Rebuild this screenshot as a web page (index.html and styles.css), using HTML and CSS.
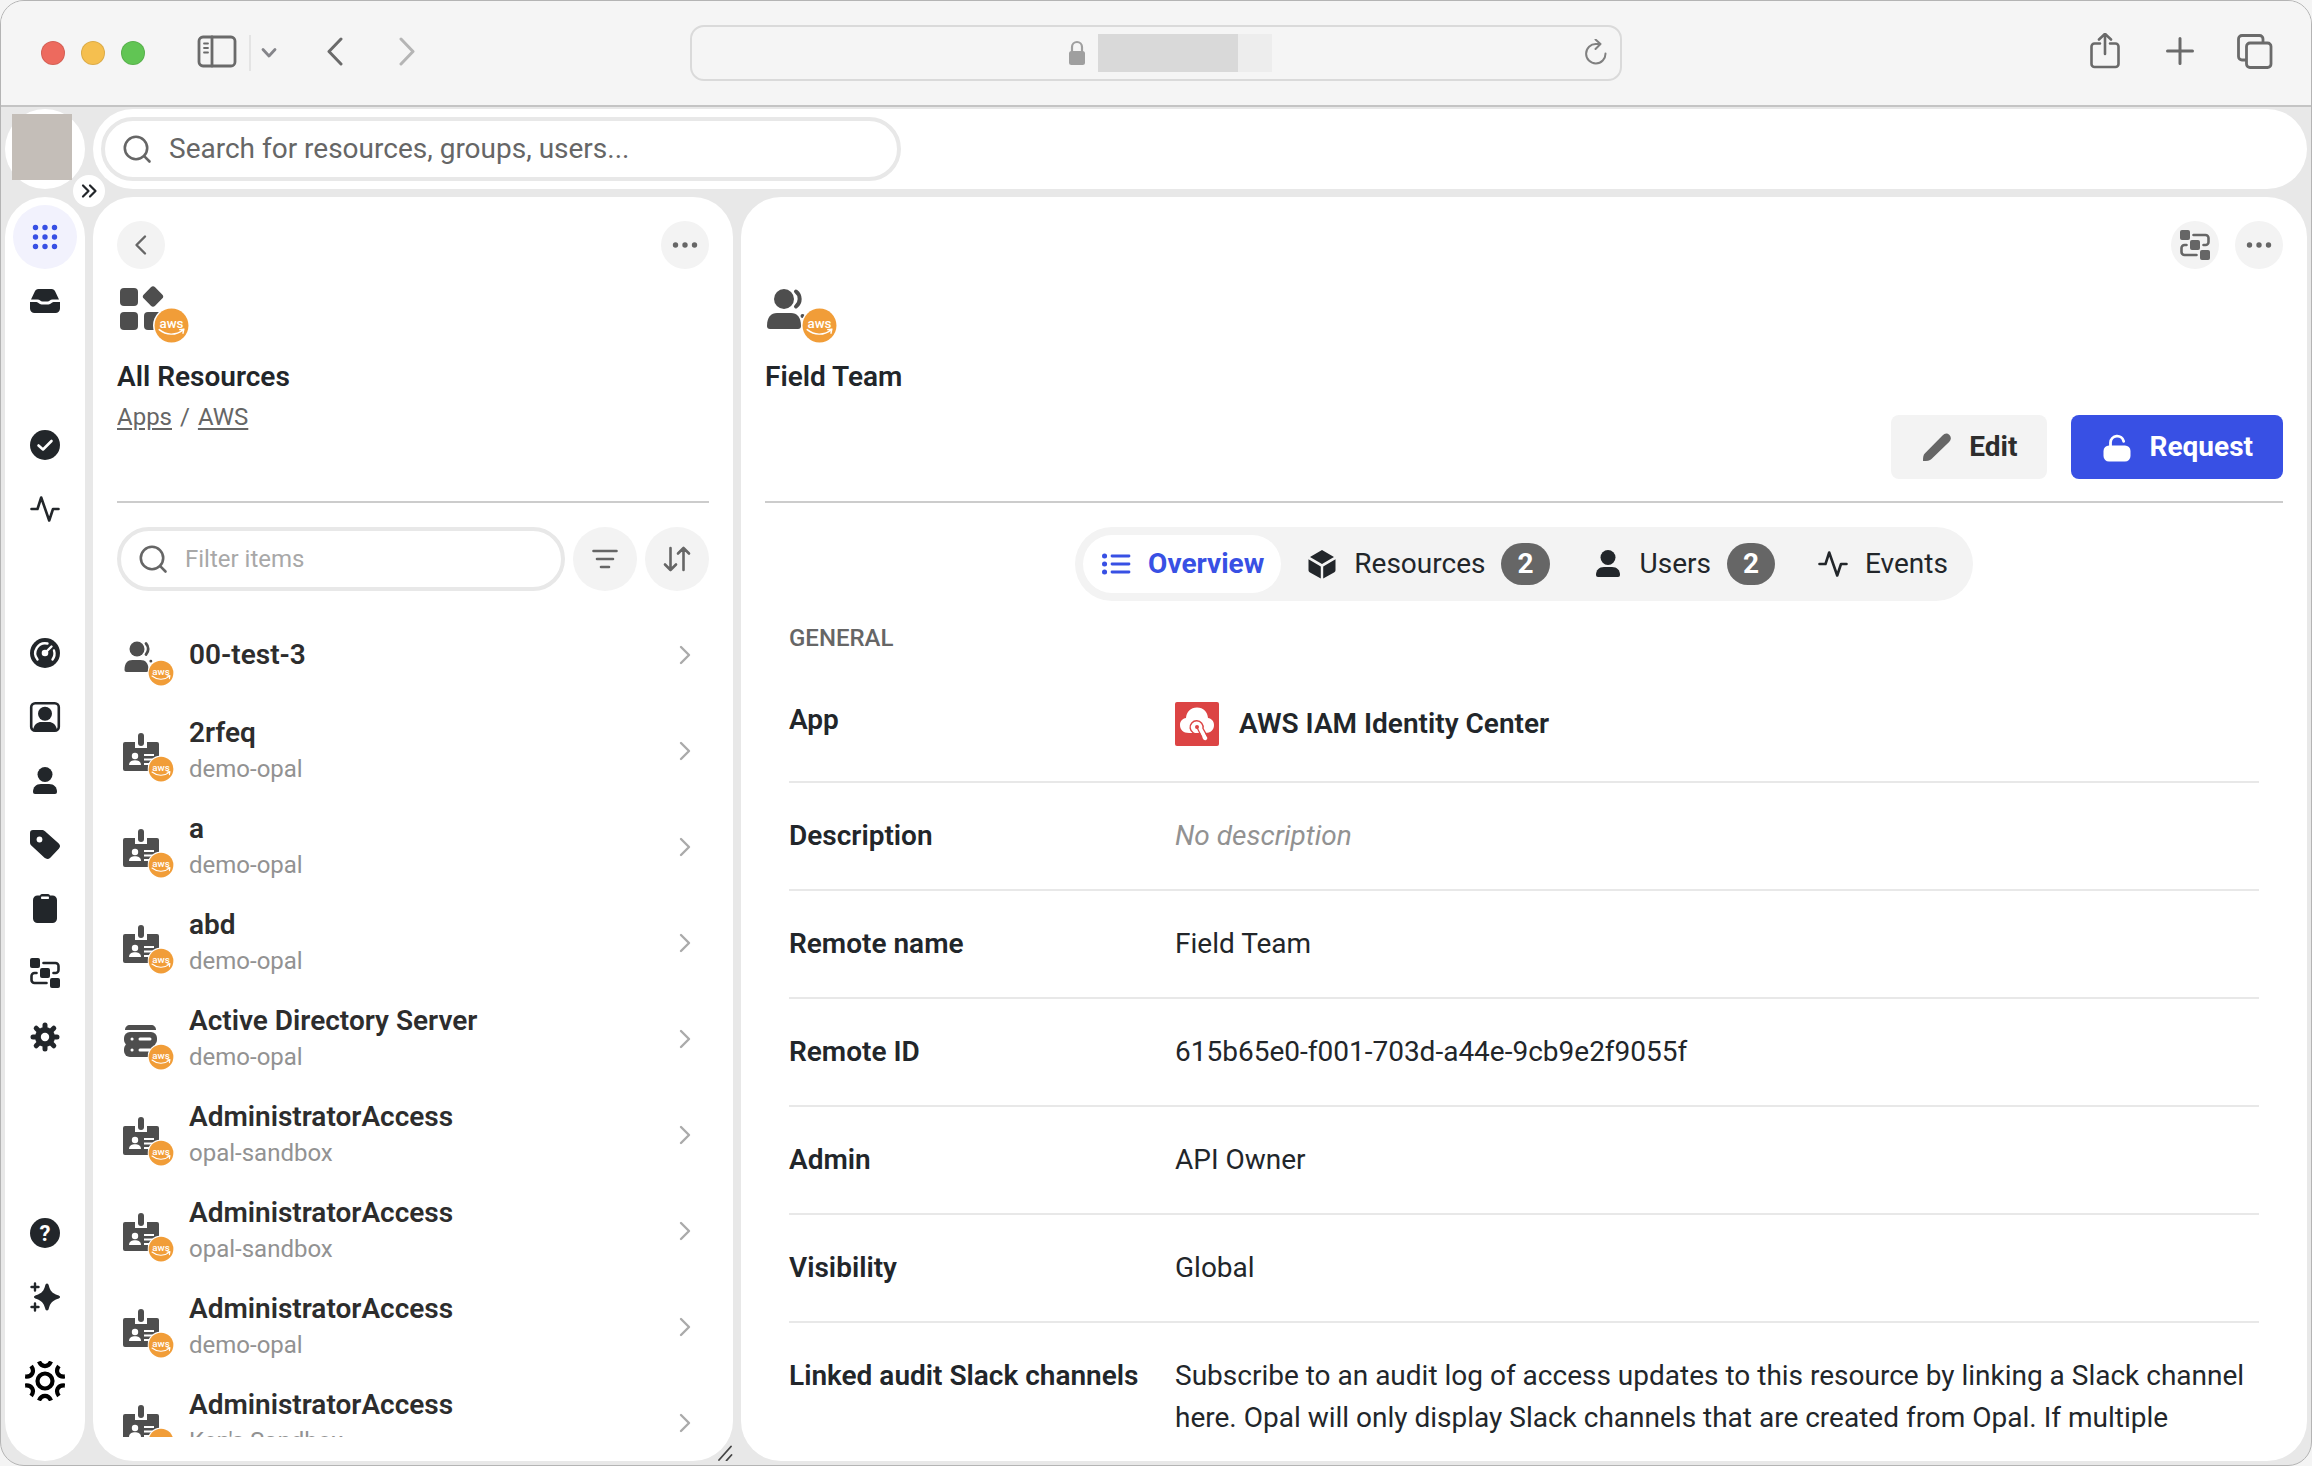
FILE: index.html
```html
<!DOCTYPE html>
<html lang="en">
<head>
    <meta charset="UTF-8">
    <meta name="viewport" content="width=device-width, initial-scale=1.0">
    <title>Field Team</title>
    <link rel="stylesheet" href="styles.css">
</head>
<body>
    <!-- Icon shapes shared by the page -->
    <svg class="sprite" aria-hidden="true">
        <symbol id="i-search" viewBox="0 0 32 32"><g fill="none" stroke="currentColor" stroke-width="2.6" stroke-linecap="round"><circle cx="15" cy="15" r="11.2"/><path d="M23.2 23.2 28.5 28.5"/></g></symbol>
        <symbol id="i-more" viewBox="0 0 32 32"><g fill="currentColor"><circle cx="6.5" cy="16" r="2.7"/><circle cx="16" cy="16" r="2.7"/><circle cx="25.5" cy="16" r="2.7"/></g></symbol>
        <symbol id="i-left" viewBox="0 0 32 32"><path d="M20 7.5 11.5 16l8.5 8.5" fill="none" stroke="currentColor" stroke-width="2.4" stroke-linecap="round" stroke-linejoin="round"/></symbol>
        <symbol id="i-right" viewBox="0 0 32 32"><path d="M12 8l8 8-8 8" fill="none" stroke="currentColor" stroke-width="2.4" stroke-linecap="round" stroke-linejoin="round"/></symbol>
        <symbol id="i-activity" viewBox="0 0 32 32"><path d="M2.5 16H8.5L12.2 4.5 20.2 27.5 24 16H29.5" fill="none" stroke="currentColor" stroke-width="2.6" stroke-linecap="round" stroke-linejoin="round"/></symbol>
        <symbol id="i-person" viewBox="0 0 32 32"><g fill="currentColor"><circle cx="16" cy="9.5" r="7.5"/><path d="M4 27c0-5 3-8 8-8h8c5 0 8 3 8 8a2 2 0 0 1-2 2H6a2 2 0 0 1-2-2Z"/></g></symbol>
        <symbol id="i-graph" viewBox="0 0 32 32"><g fill="currentColor"><rect x="1" y="1" width="10" height="10" rx="2"/><rect x="11" y="11" width="10" height="10" rx="2"/><rect x="21" y="21" width="10" height="10" rx="2"/></g><path d="M14.5 6H26.5a3 3 0 0 1 3 3v4a3 3 0 0 1-3 3H24.5M7.5 16H5.5a3 3 0 0 0-3 3v4a3 3 0 0 0 3 3H17.5" fill="none" stroke="currentColor" stroke-width="2.6" stroke-linecap="round"/></symbol>
        <symbol id="aws" viewBox="-18 -18 36 36">
            <circle r="18" fill="#fff"/>
            <circle r="16.5" fill="#f19d38"/>
            <text x="0" y="2" text-anchor="middle" class="aws-text">aws</text>
            <path d="M-12 4c7 5.500 16 6 23 .5M8 4l4-.5-.8 4" fill="none" stroke="#fff" stroke-width="1.4" stroke-linecap="round" stroke-linejoin="round"/>
        </symbol>
        <symbol id="e-users" viewBox="0 -16 64 64">
            <g fill="#4e4e4e"><circle cx="20" cy="10" r="7.5"/><path d="M7.5 31c0-7 3-10 8-10h8c5 0 8 3 8 10a2 2 0 0 1-2 2h-20a2 2 0 0 1-2-2Z"/></g>
            <path d="M29 4.5a8 8 0 0 1 0 11M33.8 22.2h.1" fill="none" stroke="#4e4e4e" stroke-width="2.8" stroke-linecap="round"/>
            <use href="#aws" x="30.5" y="20.5" width="27" height="27"/>
        </symbol>
        <symbol id="e-role" viewBox="0 -16 64 64">
            <path d="M8 7h10v6h12V7h10a2 2 0 0 1 2 2v25a2 2 0 0 1-2 2H8a2 2 0 0 1-2-2V9a2 2 0 0 1 2-2Z" fill="#4e4e4e"/>
            <rect x="21" y="-2" width="6" height="13" rx="3" fill="#4e4e4e"/>
            <g fill="#fff"><circle cx="18" cy="21" r="3.2"/><path d="M12 30c0-3.500 3-4.800 6-4.800s6 1.300 6 4.800Z"/><path d="M27 19h10v2H27ZM27 23.500h10v2H27ZM27 28h6v2h-6Z"/></g>
            <use href="#aws" x="30.5" y="20.5" width="27" height="27"/>
        </symbol>
        <symbol id="e-server" viewBox="0 -16 64 64">
            <path d="M8 7c0-3 2-5 5-5h21c3 0 5 2 5 5Z" fill="#4e4e4e"/>
            <rect x="7" y="9" width="33" height="14" rx="6" fill="#4e4e4e"/><rect x="7" y="20" width="33" height="14" rx="6" fill="#4e4e4e"/>
            <path d="M15 16h.1M15 27h.1M23 16h10M23 27h10" stroke="#fff" stroke-width="3" stroke-linecap="round"/>
            <use href="#aws" x="30.5" y="20.5" width="27" height="27"/>
        </symbol>
    </svg>

    <div class="window">
        <!-- Browser toolbar -->
        <header class="toolbar">
            <div class="toolbar-left">
                <div class="lights"><span class="light red"></span><span class="light yellow"></span><span class="light green"></span></div>
                <button class="tool sidebar-tool" aria-label="Sidebar">
                    <svg width="40" height="40" viewBox="0 0 40 40" fill="none" stroke="currentColor" stroke-width="2.8" stroke-linecap="round"><rect x="2" y="4" width="36" height="29" rx="4"/><path d="M15 4v29"/><path d="M7 10.500h4M7 15h4M7 19.500h4" stroke-width="1.8"/></svg>
                </button>
                <span class="tool-line"></span>
                <button class="tool chevron-tool" aria-label="Tab groups">
                    <svg width="16" height="16" viewBox="0 0 16 16" fill="none" stroke="currentColor" stroke-width="2.8" stroke-linecap="round" stroke-linejoin="round"><path d="M2 4.500 8 11l6-6.500"/></svg>
                </button>
                <button class="tool back-tool" aria-label="Back">
                    <svg width="20" height="32" viewBox="0 0 20 32" fill="none" stroke="currentColor" stroke-width="3" stroke-linecap="round" stroke-linejoin="round"><path d="M16 2 4 14.500 16 27"/></svg>
                </button>
                <button class="tool forward-tool" aria-label="Forward">
                    <svg width="20" height="32" viewBox="0 0 20 32" fill="none" stroke="currentColor" stroke-width="3" stroke-linecap="round" stroke-linejoin="round"><path d="M4 2l12 12.500L4 27"/></svg>
                </button>
            </div>
            <div class="address">
                <svg width="18" height="26" viewBox="0 0 18 26"><rect x="1" y="11" width="16" height="14" rx="2.5" fill="#9f9f9f"/><path d="M4 12V7a5 5 0 0 1 10 0v5" fill="none" stroke="#9f9f9f" stroke-width="2.2"/></svg>
                <span class="address-host"></span>
                <button class="tool reload" aria-label="Reload">
                    <svg width="24" height="28" viewBox="0 0 24 28" fill="none" stroke="currentColor" stroke-width="2" stroke-linecap="round" stroke-linejoin="round"><path d="M21.500 14.500A9.700 9.700 0 1 1 12 5h4M11.500 .5 16.500 5 11.500 10"/></svg>
                </button>
            </div>
            <div class="toolbar-right">
                <button class="tool" aria-label="Share">
                    <svg width="40" height="40" viewBox="0 0 40 40" fill="none" stroke="currentColor" stroke-width="2.6" stroke-linecap="round" stroke-linejoin="round"><path d="M15 10.500H9.500a3 3 0 0 0-3 3V31a3 3 0 0 0 3 3h21a3 3 0 0 0 3-3V13.500a3 3 0 0 0-3-3H25M20 21V1M14 6.500 20 .8l6 5.700"/></svg>
                </button>
                <button class="tool" aria-label="New tab">
                    <svg width="40" height="40" viewBox="0 0 40 40" fill="none" stroke="currentColor" stroke-width="3" stroke-linecap="round"><path d="M20 5.500v25M7.500 18h25"/></svg>
                </button>
                <button class="tool" aria-label="Tabs">
                    <svg width="40" height="40" viewBox="0 0 40 40" fill="none" stroke="currentColor" stroke-width="2.8" stroke-linejoin="round"><path d="M11 27H7a3.500 3.500 0 0 1-3.500-3.500V6A3.500 3.500 0 0 1 7 2.500H24.500A3.500 3.500 0 0 1 28 6v4"/><rect x="11.5" y="10" width="24.5" height="24.5" rx="3.5"/></svg>
                </button>
            </div>
        </header>

        <div class="app">
            <div class="logo"><span class="logo-image"></span></div>

            <div class="topbar">
                <label class="search">
                    <svg class="icon"><use href="#i-search"/></svg>
                    <input type="text" placeholder="Search for resources, groups, users..." aria-label="Search">
                </label>
            </div>

            <!-- Navigation rail -->
            <nav class="rail">
                <button class="expand" aria-label="Expand menu">
                    <svg width="20" height="20" viewBox="0 0 20 20" fill="none" stroke="currentColor" stroke-width="2.2" stroke-linecap="round" stroke-linejoin="round"><path d="M4 4.500 9.500 10 4 15.500M11 4.500 16.500 10 11 15.500"/></svg>
                </button>
                <div class="rail-group">
                    <a class="rail-item active" href="#" aria-label="Catalog">
                        <svg class="icon" viewBox="0 0 32 32" fill="currentColor"><circle cx="6.5" cy="6.5" r="2.7"/><circle cx="16" cy="6.5" r="2.7"/><circle cx="25.5" cy="6.5" r="2.7"/><circle cx="6.5" cy="16" r="2.7"/><circle cx="16" cy="16" r="2.7"/><circle cx="25.5" cy="16" r="2.7"/><circle cx="6.5" cy="25.5" r="2.7"/><circle cx="16" cy="25.5" r="2.7"/><circle cx="25.5" cy="25.5" r="2.7"/></svg>
                    </a>
                    <a class="rail-item" href="#" aria-label="Inbox">
                        <svg class="icon" viewBox="0 0 32 32" fill="currentColor"><path d="M9.5 4h13c2 0 3 1 3.700 2.400L30 14.500h-6.500c-2.500 0-3 2-5 2h-5c-2 0-2.500-2-5-2H2l3.800-8.100C6.500 5 7.500 4 9.500 4Z"/><path d="M1 17h6.500c2 0 2.500 2.500 5 2.500h7c2.500 0 3-2.500 5-2.500H31v6.500a4.500 4.500 0 0 1-4.500 4.500h-21A4.500 4.500 0 0 1 1 23.500Z"/></svg>
                    </a>
                </div>
                <div class="rail-group">
                    <a class="rail-item" href="#" aria-label="Reviews">
                        <svg class="icon" viewBox="0 0 32 32"><circle cx="16" cy="16" r="15" fill="currentColor"/><path d="M9.500 16.500 14 20.500l8.500-8.500" fill="none" stroke="#fff" stroke-width="2.6" stroke-linecap="round" stroke-linejoin="round"/></svg>
                    </a>
                    <a class="rail-item" href="#" aria-label="Events"><svg class="icon"><use href="#i-activity"/></svg></a>
                </div>
                <div class="rail-group">
                    <a class="rail-item" href="#" aria-label="Insights">
                        <svg class="icon" viewBox="0 0 32 32"><circle cx="16" cy="16" r="15" fill="currentColor"/><g fill="none" stroke="#fff" stroke-width="2.4" stroke-linecap="round"><path d="M8.500 22.500A10 10 0 0 1 18.500 6.500M25 13.500a10 10 0 0 1-1.500 9M16 16l6.500-6.500"/></g><circle cx="16" cy="16" r="3.3" fill="#fff"/></svg>
                    </a>
                    <a class="rail-item" href="#" aria-label="Owners">
                        <svg class="icon" viewBox="0 0 32 32"><rect x="2.2" y="2.2" width="27.6" height="27.6" rx="4" fill="none" stroke="currentColor" stroke-width="2.6"/><circle cx="16" cy="12.7" r="7" fill="currentColor"/><path d="M4 29c1-6 5-8 8-8h8c3 0 7 2 8 8Z" fill="currentColor"/></svg>
                    </a>
                    <a class="rail-item" href="#" aria-label="Users"><svg class="icon"><use href="#i-person"/></svg></a>
                    <a class="rail-item" href="#" aria-label="Tags">
                        <svg class="icon" viewBox="0 0 32 32"><path d="M4 1h8.500c1.500 0 2.500.5 3.500 1.300l13.500 12c2 2 2 3.700.3 5.400l-8.500 9c-1.800 1.700-4 1.600-5.800.1L2.300 16.500C1.300 15.500 1 14.500 1 13V4a3 3 0 0 1 3-3Z" fill="currentColor"/><circle cx="10.5" cy="10.5" r="2.9" fill="#fff"/></svg>
                    </a>
                    <a class="rail-item" href="#" aria-label="Requests">
                        <svg class="icon" viewBox="0 0 32 32"><path d="M11 2.500A2 2 0 0 1 13 1h6a2 2 0 0 1 2 1.500h2.500A4.500 4.500 0 0 1 28 7v18.500a4.500 4.500 0 0 1-4.500 4.500h-15A4.500 4.500 0 0 1 4 25.500V7a4.500 4.500 0 0 1 4.500-4.500Z" fill="currentColor"/><rect x="12" y="3.5" width="8" height="2.6" rx=".8" fill="#fff"/></svg>
                    </a>
                    <a class="rail-item" href="#" aria-label="Access graph"><svg class="icon"><use href="#i-graph"/></svg></a>
                    <a class="rail-item" href="#" aria-label="Settings">
                        <svg class="icon" viewBox="-16 -16 32 32"><g stroke="currentColor" stroke-width="5" stroke-linecap="round"><path d="M0-12V12M-12 0H12M-8.800-8.800 8.800 8.800M8.800-8.800-8.800 8.800"/></g><circle r="10" fill="currentColor"/><circle r="4.2" fill="#fff"/></svg>
                    </a>
                </div>
                <div class="rail-group rail-bottom">
                    <a class="rail-item" href="#" aria-label="Help">
                        <svg class="icon" viewBox="0 0 32 32"><circle cx="16" cy="16" r="15" fill="currentColor"/><text x="16" y="24" text-anchor="middle" class="help-text">?</text></svg>
                    </a>
                    <a class="rail-item" href="#" aria-label="What's new">
                        <svg class="icon" viewBox="0 0 32 32"><path d="M18 2.500c1.200 0 1.500 1 1.800 2 1.500 5.500 3 7.500 9.200 9.800 1 .4 2 .7 2 1.700s-1 1.300-2 1.700c-6.200 2.300-7.700 4.300-9.200 9.800-.3 1-.6 2-1.800 2s-1.500-1-1.800-2c-1.500-5.500-3-7.500-9.200-9.800-1-.4-2-.7-2-1.700s1-1.300 2-1.700c6.200-2.300 7.700-4.300 9.200-9.800.3-1 .6-2 1.800-2Z" fill="currentColor"/><path d="M6 2.500v7M2.500 6h7M6 22.500v7M2.500 26h7" stroke="currentColor" stroke-width="2.4" stroke-linecap="round"/></svg>
                    </a>
                    <a class="rail-item rail-logo" href="#" aria-label="Opal">
                        <svg width="40" height="40" viewBox="-20 -20 40 40" fill="none" stroke="#000" stroke-width="4.2"><circle r="7.5"/><path id="petal" d="M-6-19.500c1.500 3.500 3.500 4.700 6 4.700s4.500-1.200 6-4.700"/><use href="#petal" transform="rotate(60)"/><use href="#petal" transform="rotate(120)"/><use href="#petal" transform="rotate(180)"/><use href="#petal" transform="rotate(240)"/><use href="#petal" transform="rotate(300)"/></svg>
                    </a>
                </div>
            </nav>

            <div class="panels">
                <!-- Resource list -->
                <section class="panel list-panel">
                    <div class="panel-head">
                        <div class="panel-tools">
                            <button class="round" aria-label="Back"><svg class="icon"><use href="#i-left"/></svg></button>
                            <button class="round push" aria-label="More"><svg class="icon"><use href="#i-more"/></svg></button>
                        </div>
                        <svg class="entity" viewBox="0 0 80 64">
                            <g fill="#4e4e4e"><rect x="3" y="11" width="18" height="18" rx="4"/><rect x="3" y="35" width="18" height="18" rx="4"/><rect x="27" y="35" width="18" height="18" rx="4"/><rect x="28" y="11.5" width="16" height="16" rx="3" transform="rotate(45 36 19.5)"/></g>
                            <use href="#aws" x="36" y="30" width="37" height="37"/>
                        </svg>
                        <h2 class="panel-title">All Resources</h2>
                        <div class="crumbs"><a href="#">Apps</a><span>/</span><a href="#">AWS</a></div>
                    </div>
                    <div class="filter-row">
                        <label class="search filter">
                            <svg class="icon"><use href="#i-search"/></svg>
                            <input type="text" placeholder="Filter items" aria-label="Filter items">
                        </label>
                        <button class="round large" aria-label="Filter">
                            <svg class="icon" viewBox="0 0 32 32" stroke="currentColor" stroke-width="2.6" stroke-linecap="round"><path d="M4.500 8h23M8 16h16M12 24h8"/></svg>
                        </button>
                        <button class="round large" aria-label="Sort">
                            <svg class="icon" viewBox="0 0 32 32" fill="none" stroke="currentColor" stroke-width="2.6" stroke-linecap="round" stroke-linejoin="round"><path d="M9.500 5v22M4 21.500 9.500 27l5.500-5.500M22.500 27V5M17 10.500 22.500 5l5.500 5.500"/></svg>
                        </button>
                    </div>
                    <ul class="items">
                        <li><a class="item" href="#"><svg class="item-icon"><use href="#e-users"/></svg><span class="item-text"><span class="item-name">00-test-3</span></span><svg class="icon arrow"><use href="#i-right"/></svg></a></li>
                        <li><a class="item" href="#"><svg class="item-icon"><use href="#e-role"/></svg><span class="item-text"><span class="item-name">2rfeq</span><span class="item-sub">demo-opal</span></span><svg class="icon arrow"><use href="#i-right"/></svg></a></li>
                        <li><a class="item" href="#"><svg class="item-icon"><use href="#e-role"/></svg><span class="item-text"><span class="item-name">a</span><span class="item-sub">demo-opal</span></span><svg class="icon arrow"><use href="#i-right"/></svg></a></li>
                        <li><a class="item" href="#"><svg class="item-icon"><use href="#e-role"/></svg><span class="item-text"><span class="item-name">abd</span><span class="item-sub">demo-opal</span></span><svg class="icon arrow"><use href="#i-right"/></svg></a></li>
                        <li><a class="item" href="#"><svg class="item-icon"><use href="#e-server"/></svg><span class="item-text"><span class="item-name">Active Directory Server</span><span class="item-sub">demo-opal</span></span><svg class="icon arrow"><use href="#i-right"/></svg></a></li>
                        <li><a class="item" href="#"><svg class="item-icon"><use href="#e-role"/></svg><span class="item-text"><span class="item-name">AdministratorAccess</span><span class="item-sub">opal-sandbox</span></span><svg class="icon arrow"><use href="#i-right"/></svg></a></li>
                        <li><a class="item" href="#"><svg class="item-icon"><use href="#e-role"/></svg><span class="item-text"><span class="item-name">AdministratorAccess</span><span class="item-sub">opal-sandbox</span></span><svg class="icon arrow"><use href="#i-right"/></svg></a></li>
                        <li><a class="item" href="#"><svg class="item-icon"><use href="#e-role"/></svg><span class="item-text"><span class="item-name">AdministratorAccess</span><span class="item-sub">demo-opal</span></span><svg class="icon arrow"><use href="#i-right"/></svg></a></li>
                        <li><a class="item" href="#"><svg class="item-icon"><use href="#e-role"/></svg><span class="item-text"><span class="item-name">AdministratorAccess</span><span class="item-sub">Ken's Sandbox</span></span><svg class="icon arrow"><use href="#i-right"/></svg></a></li>
                    </ul>
                    <svg class="resize" viewBox="0 0 16 16" stroke="#444" stroke-width="1.8" stroke-linecap="round"><path d="M2 15 14 1.500M9.500 15.500 14.500 10"/></svg>
                </section>

                <!-- Group details -->
                <main class="panel detail-panel">
                    <div class="panel-head">
                        <div class="panel-tools">
                            <button class="round push" aria-label="Access graph"><svg class="icon"><use href="#i-graph"/></svg></button>
                            <button class="round" aria-label="More"><svg class="icon"><use href="#i-more"/></svg></button>
                        </div>
                        <svg class="entity" viewBox="0 0 80 64">
                            <g fill="#4e4e4e"><circle cx="19" cy="22" r="10"/><path d="M2 49c0-9 4-13 10-13h14c6 0 10 4 10 13a3 3 0 0 1-3 3H5a3 3 0 0 1-3-3Z"/></g>
                            <path d="M31 14.500a9.500 9.500 0 0 1 0 15M37.500 39h.1" fill="none" stroke="#4e4e4e" stroke-width="4" stroke-linecap="round"/>
                            <use href="#aws" x="36" y="30" width="37" height="37"/>
                        </svg>
                        <h1 class="panel-title">Field Team</h1>
                        <div class="actions">
                            <button class="btn">
                                <svg class="icon" viewBox="0 0 32 32" fill="#666"><path d="M2 30c0-4 .3-6 2-7.700L21.500 4.500c2.200-2.200 4.500-2.800 7-.6 2 2.300 1.800 4.800-.4 7L10.500 28C8.800 29.700 6 30 2 30Z"/></svg>
                                Edit
                            </button>
                            <button class="btn primary">
                                <svg class="icon" viewBox="0 0 32 32"><rect x="2.5" y="14.5" width="27" height="16" rx="5.5" fill="#fff"/><path d="M9.500 16v-4.500a6.700 6.700 0 0 1 13.200-1.200" fill="none" stroke="#fff" stroke-width="2.8" stroke-linecap="round"/></svg>
                                Request
                            </button>
                        </div>
                    </div>

                    <div class="tabs" role="tablist">
                        <button class="tab selected" role="tab" aria-selected="true">
                            <svg class="icon" viewBox="0 0 32 32" fill="none" stroke="currentColor" stroke-width="2.8" stroke-linecap="round"><path d="M12 8h17M12 16h17M12 24h17"/><path d="M4.500 8h.1M4.500 16h.1M4.500 24h.1" stroke-width="5"/></svg>
                            Overview
                        </button>
                        <button class="tab" role="tab">
                            <svg class="icon" viewBox="0 0 32 32" fill="currentColor"><path d="M16 2 28 9 16 16 4 9ZM2.500 11.300l12.300 7.200V30.500L4 24.500c-1-.6-1.500-1.300-1.500-2.500ZM29.500 11.300 17.200 18.500V30.500L28 24.500c1-.6 1.500-1.300 1.500-2.500Z"/></svg>
                            Resources <span class="count">2</span>
                        </button>
                        <button class="tab" role="tab">
                            <svg class="icon"><use href="#i-person"/></svg>
                            Users <span class="count">2</span>
                        </button>
                        <button class="tab" role="tab">
                            <svg class="icon"><use href="#i-activity"/></svg>
                            Events
                        </button>
                    </div>

                    <div class="details">
                        <h3 class="details-title">GENERAL</h3>
                        <dl>
                            <div class="row">
                                <dt>App</dt>
                                <dd class="app-name">
                                    <svg width="44" height="50" viewBox="0 0 44 50"><rect x="0" y="3" width="44" height="44" rx="2" fill="#dc4444"/><path d="M14 34c-6 0-9-3.500-9-8 0-4 2.500-6.500 6-7 .5-6 4.500-10.500 11-10.500S32.500 13 33 19c3.500.5 6 3 6 7 0 4.500-3 8-9 8Z" fill="#fff"/><path d="M22 31.500c3 0 4.500-1.500 5-3.500l5 10c.6 1.500.2 2.500-1 3s-2.500 0-3-1.200L24.500 33Z" fill="#fff"/><path d="M23.500 34.500a6.500 6.500 0 1 1 4.500-5l4.500 8" fill="none" stroke="#dc4444" stroke-width="1.4"/><circle cx="22" cy="28" r="2" fill="#dc4444"/><path d="M22 28.500 27 38.500" stroke="#dc4444" stroke-width="1.2"/></svg>
                                    AWS IAM Identity Center
                                </dd>
                            </div>
                            <div class="row"><dt>Description</dt><dd class="empty">No description</dd></div>
                            <div class="row"><dt>Remote name</dt><dd>Field Team</dd></div>
                            <div class="row"><dt>Remote ID</dt><dd>615b65e0-f001-703d-a44e-9cb9e2f9055f</dd></div>
                            <div class="row"><dt>Admin</dt><dd>API Owner</dd></div>
                            <div class="row"><dt>Visibility</dt><dd>Global</dd></div>
                            <div class="row"><dt>Linked audit Slack channels</dt><dd>Subscribe to an audit log of access updates to this resource by linking a Slack channel here. Opal will only display Slack channels that are created from Opal. If multiple</dd></div>
                        </dl>
                    </div>
                </main>
            </div>
        </div>
    </div>
</body>
</html>
```
FILE: styles.css
```css
* {
    box-sizing: border-box;
}

body {
    margin: 0;
    background-color: #f4f4f4;
    font-family: Roboto, "Liberation Sans", sans-serif;
    font-size: 28px;
    line-height: 42px;
    color: #22262a;
}

h1, h2, h3, ul, dl, dd {
    margin: 0;
    padding: 0;
}

button {
    border: 0;
    padding: 0;
    background: none;
    font: inherit;
    color: inherit;
}

a {
    color: inherit;
    text-decoration: none;
}

svg {
    display: block;
    flex: none;
}

.sprite {
    position: absolute;
    width: 0;
    height: 0;
}

.icon {
    width: 32px;
    height: 32px;
}

.aws-text {
    font-size: 13px;
    font-weight: 500;
    fill: #fff;
}

.help-text {
    font-size: 22px;
    font-weight: 700;
    fill: #fff;
}

.window {
    display: flex;
    flex-direction: column;
    height: 100vh;
    border: 1px solid #b4b4b4;
    border-radius: 24px;
    overflow: hidden;
    background-color: #e8e8e8;
}

/* Browser toolbar */
.toolbar {
    display: grid;
    grid-template-columns: 1fr minmax(0, 932px) 1fr;
    align-items: center;
    height: 106px;
    flex: none;
    background-color: #f5f5f5;
    border-bottom: 2px solid #c4c4c4;
    color: #6a6a6a;
}

.toolbar-left {
    display: flex;
    align-items: center;
    padding-left: 40px;
}

.lights {
    display: flex;
    gap: 16px;
}

.light {
    width: 24px;
    height: 24px;
    border-radius: 50%;
    border: 1px solid rgba(0, 0, 0, 0.1);
}

.red {
    background-color: #ed6a5e;
}

.yellow {
    background-color: #f5bf4f;
}

.green {
    background-color: #61c554;
}

.sidebar-tool {
    margin-left: 52px;
}

.tool-line {
    width: 2px;
    height: 36px;
    margin: 0 10px 0 12px;
    background-color: #e4e4e4;
}

.chevron-tool {
    color: #85858a;
}

.back-tool {
    margin-left: 48px;
}

.forward-tool {
    margin-left: 52px;
    color: #b5b5b5;
}

.address {
    display: flex;
    align-items: center;
    justify-content: center;
    gap: 12px;
    height: 56px;
    padding-left: 28px;
    position: relative;
    border: 2px solid #dadada;
    border-radius: 14px;
}

.address-host {
    width: 174px;
    height: 38px;
    background: linear-gradient(to right, #d9d9d9 140px, #ededed 140px);
}

.reload {
    position: absolute;
    right: 12px;
    color: #808080;
}

.toolbar-right {
    display: flex;
    justify-content: flex-end;
    gap: 35px;
    padding-right: 36px;
}

/* App shell */
.app {
    flex: 1;
    min-height: 0;
    display: grid;
    grid-template-columns: 80px minmax(0, 1fr);
    grid-template-rows: 80px minmax(0, 1fr);
    gap: 8px;
    padding: 2px 4px 4px;
}

.logo {
    padding: 5px 7px;
    border-radius: 40px;
    background-color: #fff;
}

.logo-image {
    display: block;
    width: 60px;
    height: 66px;
    background-color: #c4beb8;
}

.topbar {
    display: flex;
    align-items: center;
    padding: 0 8px;
    border-radius: 40px;
    background-color: #fff;
}

.search {
    display: flex;
    align-items: center;
    gap: 16px;
    height: 64px;
    padding: 0 16px;
    border: 4px solid #e8e8e8;
    border-radius: 32px;
    color: #666;
}

.topbar .search {
    width: 800px;
}

.search input {
    flex: 1;
    min-width: 0;
    border: 0;
    padding: 0;
    outline: 0;
    background: none;
    font: inherit;
    color: #22262a;
}

.search input::placeholder {
    color: #666;
}

/* Navigation rail */
.rail {
    position: relative;
    display: flex;
    flex-direction: column;
    gap: 80px;
    padding: 8px 8px 48px;
    border-radius: 40px;
    background-color: #fff;
}

.rail-item {
    display: flex;
    align-items: center;
    justify-content: center;
    width: 64px;
    height: 64px;
    border-radius: 50%;
}

.rail-item.active {
    background-color: #f2f2fd;
    color: #3850e4;
}

.rail-bottom {
    margin-top: auto;
}

.rail-logo {
    margin-top: 20px;
}

.expand {
    position: absolute;
    top: -22px;
    right: -20px;
    display: flex;
    align-items: center;
    justify-content: center;
    width: 32px;
    height: 32px;
    border-radius: 50%;
    background-color: #fff;
}

/* Panels */
.panels {
    display: flex;
    gap: 8px;
    min-height: 0;
}

.panel {
    display: flex;
    flex-direction: column;
    min-width: 0;
    padding: 24px;
    border-radius: 40px;
    background-color: #fff;
}

.list-panel {
    position: relative;
    flex: 0 0 640px;
}

.detail-panel {
    flex: 1;
}

.panel-head {
    display: flex;
    flex-direction: column;
    flex: none;
    height: 282px;
    border-bottom: 2px solid #ccc;
}

.panel-tools {
    display: flex;
    gap: 16px;
    margin-bottom: 8px;
}

.push {
    margin-left: auto;
}

.round {
    display: flex;
    align-items: center;
    justify-content: center;
    flex: none;
    width: 48px;
    height: 48px;
    border-radius: 50%;
    background-color: #f3f3f3;
    color: #666;
}

.round.large {
    width: 64px;
    height: 64px;
}

.entity {
    width: 80px;
    height: 64px;
    overflow: visible;
}

.panel-title {
    margin-top: 16px;
    font-size: 28px;
    font-weight: 600;
    line-height: 40px;
}

.crumbs {
    display: flex;
    gap: 8px;
    font-size: 24px;
    line-height: 40px;
    color: #666;
}

.crumbs a {
    text-decoration: underline;
    text-underline-offset: 3px;
}

.actions {
    display: flex;
    justify-content: flex-end;
    gap: 24px;
    margin-top: auto;
    margin-bottom: 22px;
}

.btn {
    display: flex;
    align-items: center;
    gap: 16px;
    height: 64px;
    padding: 0 30px;
    border-radius: 8px;
    background-color: #f3f3f3;
    font-weight: 700;
    color: #2d2d2d;
}

.btn.primary {
    background-color: #3850e4;
    color: #fff;
}

.filter-row {
    display: flex;
    gap: 8px;
    margin: 24px 0 16px;
}

.search.filter {
    flex: 1;
    min-width: 0;
    font-size: 24px;
}

.filter input::placeholder {
    color: #a8a8a8;
}

.items {
    flex: 1;
    min-height: 0;
    overflow: hidden;
    list-style: none;
}

.item {
    display: flex;
    align-items: center;
    gap: 8px;
    height: 96px;
    padding-right: 8px;
    color: #2d2d2d;
}

.item-icon {
    width: 64px;
    height: 64px;
}

.item-text {
    flex: 1;
    display: flex;
    flex-direction: column;
    line-height: 36px;
}

.item-name {
    font-weight: 600;
}

.item-sub {
    font-size: 24px;
    color: #929292;
}

.arrow {
    color: #aaa;
}

.resize {
    position: absolute;
    right: 0;
    bottom: 0;
    width: 16px;
    height: 16px;
}

/* Tabs */
.tabs {
    display: flex;
    align-self: center;
    flex: none;
    gap: 8px;
    margin: 24px 0 16px;
    padding: 8px;
    border-radius: 37px;
    background-color: #f3f3f3;
}

.tab {
    display: flex;
    align-items: center;
    gap: 16px;
    height: 58px;
    padding: 0 17px;
    border-radius: 29px;
}

.tab.selected {
    background-color: #fff;
    font-weight: 700;
    color: #3850e4;
}

.count {
    padding: 0 16px;
    border-radius: 21px;
    background-color: #666;
    font-weight: 700;
    color: #fff;
}

/* Details */
.details {
    flex: 1;
    min-height: 0;
    overflow: hidden;
    padding: 0 24px;
}

.details-title {
    margin-bottom: 8px;
    font-size: 24px;
    font-weight: 500;
    color: #666;
}

.row {
    display: grid;
    grid-template-columns: 386px minmax(0, 1fr);
    padding: 32px 0;
    border-bottom: 2px solid #e8e8e8;
}

.row:last-child {
    border-bottom: 0;
}

dt {
    font-weight: 600;
}

.app-name {
    display: flex;
    align-items: center;
    gap: 20px;
    font-weight: 600;
}

.empty {
    font-style: italic;
    color: #929292;
}
```
